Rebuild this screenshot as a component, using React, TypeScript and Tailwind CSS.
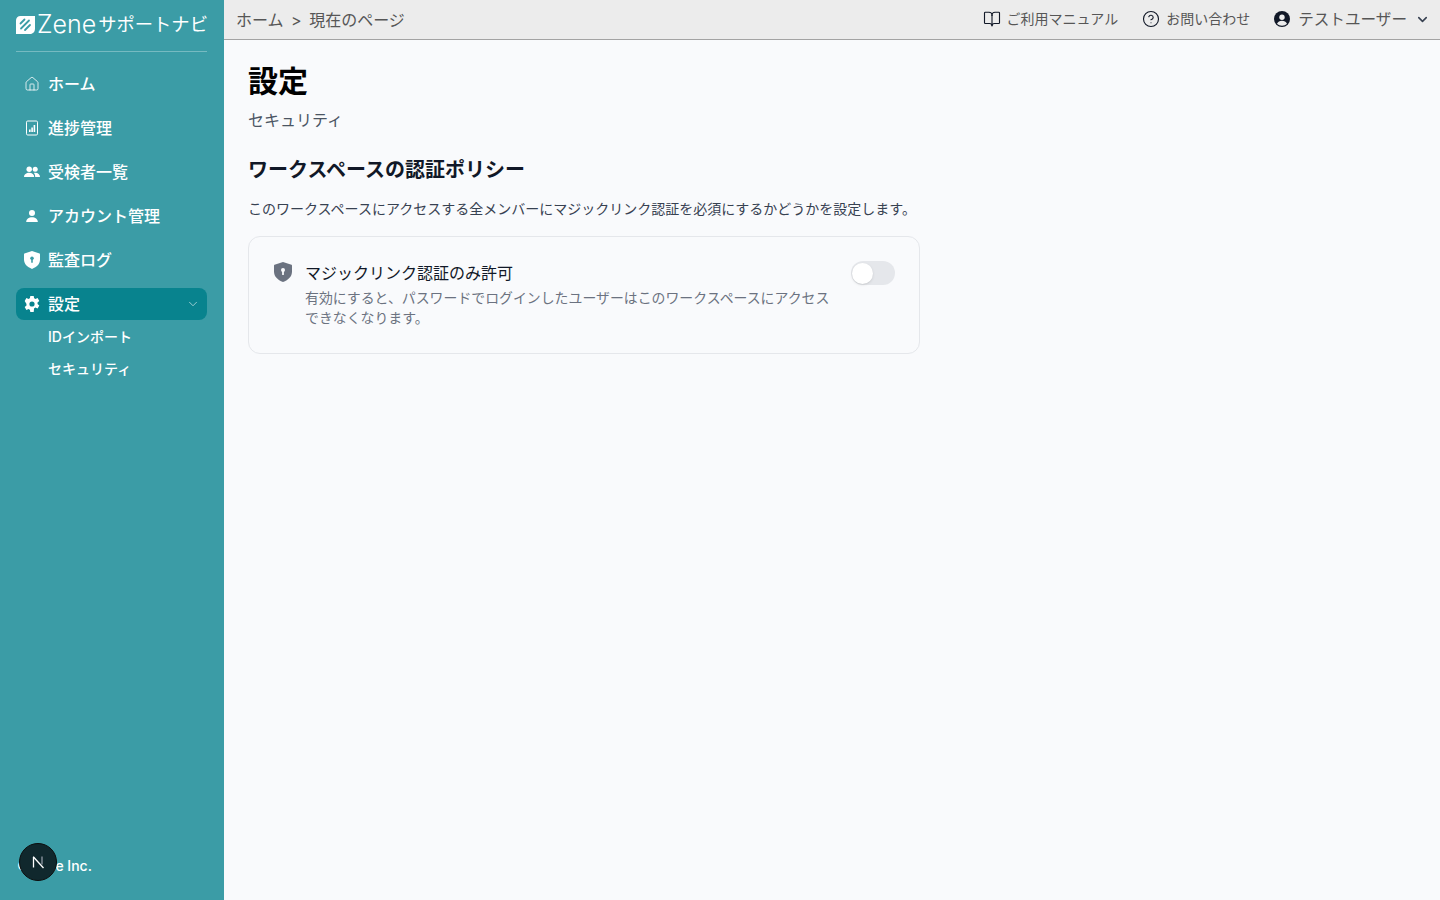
import { ChevronDown, House, BookOpen, CircleHelp } from "lucide-react";
import { ReactNode } from "react";

const font = "font-['Inter','Noto_Sans_CJK_JP',sans-serif]";

const IconProgress = () => (
  <svg width="16" height="16" viewBox="0 0 16 16" fill="none">
    <rect x="2.5" y="1" width="11" height="14" rx="1.2" stroke="white" strokeWidth="1" />
    <rect x="5" y="9.5" width="1.6" height="2.5" fill="white" />
    <rect x="7.3" y="7.5" width="1.6" height="4.5" fill="white" />
    <rect x="9.6" y="5" width="1.6" height="7" fill="white" />
  </svg>
);

const IconPeople = () => (
  <svg width="16" height="16" viewBox="0 0 16 16" fill="white">
    <circle cx="5.2" cy="5.2" r="2.7" />
    <circle cx="11.2" cy="5.2" r="2.5" />
    <path d="M0 13c0-2.6 2.3-4.2 5.2-4.2s5 1.6 5 4.2H0z" />
    <path d="M11.2 13H16c0-2.6-2-4.2-4.8-4.2-.6 0-1 .1-1.4.2 1 .9 1.4 2.4 1.4 4z" />
  </svg>
);

const IconUser = () => (
  <svg width="16" height="16" viewBox="0 0 16 16" fill="white">
    <circle cx="8" cy="5" r="3" />
    <path d="M2.2 14c0-3 2.6-4.8 5.8-4.8s5.8 1.800 5.800 4.800H2.200z" />
  </svg>
);

// filled shield with a keyhole
const IconShield = ({ color, hole, w, h }: { color: string; hole: string; w: number; h: number }) => (
  <svg width={w} height={h} viewBox="0 0 18 20">
    <path d="M9 0l8.500 2.800c.3.100.5.400.5.700v6c0 4.800-3.500 8.600-9 10.500C3.500 18.100 0 14.300 0 9.500v-6c0-.3.200-.6.500-.7L9 0z" fill={color} />
    <circle cx="9" cy="8" r="2" fill={hole} />
    <rect x="8.100" y="8.500" width="1.800" height="4.500" rx="0.600" fill={hole} />
  </svg>
);

const IconGear = () => (
  <svg width="16" height="16" viewBox="0 0 16 16" fill="white">
    <path
      fillRule="evenodd"
      d="M6.300 0h3.400l.4 2.200c.5.200.9.400 1.300.7l2.200-.8 1.700 2.900-1.800 1.500c.1.500.1 1 0 1.500l1.800 1.500-1.700 2.900-2.200-.8c-.4.300-.8.500-1.300.7L9.700 16H6.300l-.4-2.200c-.5-.2-.9-.4-1.300-.7l-2.200.8L.7 11l1.800-1.500c-.1-.5-.1-1 0-1.500L.7 5l1.700-2.900 2.200.8c.4-.3.8-.5 1.300-.7L6.300 0zM8 5.400a2.600 2.600 0 100 5.200 2.600 2.600 0 000-5.200z"
    />
  </svg>
);

const IconAccount = () => (
  <svg width="16" height="16" viewBox="0 0 16 16">
    <circle cx="8" cy="8" r="8" fill="#111827" />
    <circle cx="8" cy="6.200" r="2.700" fill="#ececec" />
    <path d="M3 12.700c.8-1.900 2.800-2.900 5-2.900s4.200 1 5 2.900C11.800 14 10 14.700 8 14.700s-3.800-.7-5-2z" fill="#ececec" />
  </svg>
);

const Logo = () => (
  <svg width="19" height="18" viewBox="0 0 19 18" className="shrink-0">
    <path d="M4.500 0H19v12.500c0 3.200-2 5.500-5 5.500H0V4.500C0 1.800 1.800 0 4.500 0z" fill="white" />
    <path d="M4.500 7.500l4-4M5 12.500l8-8M9 14l5-5" stroke="#3b9ca6" strokeWidth="1.800" strokeLinecap="round" />
  </svg>
);

const NextMark = () => (
  <svg width="14" height="14" viewBox="0 0 14 14" fill="none">
    <path d="M2.500 12.500V1.800" stroke="white" strokeWidth="1.300" />
    <path d="M2.300 1.800L12.500 13" stroke="white" strokeWidth="1.300" />
    <path d="M11 1.500v8" stroke="#9ca3af" strokeWidth="1.200" />
  </svg>
);

const NavItem = ({ icon, label }: { icon: ReactNode; label: string }) => (
  <div className="flex h-8 items-center gap-2 rounded-lg px-2 text-base font-medium text-white">
    <span className="flex w-4 justify-center">{icon}</span>
    {label}
  </div>
);

export default function App() {
  return (
    <div className={`relative flex h-[900px] w-[1440px] overflow-hidden bg-[#f9fafc] ${font}`}>
      <aside className="flex w-[224px] shrink-0 flex-col bg-[#3b9ca6] pr-[17px] pl-4">
        <div className="flex h-[52px] items-center gap-[2px] border-b border-white/30 pb-[2px] text-white">
          <Logo />
          <span className="text-[25px] leading-none font-light">Zene</span>
          <span className="text-[18.300px] leading-none whitespace-nowrap">サポートナビ</span>
        </div>
        <nav className="mt-4 flex flex-col gap-3">
          <NavItem icon={<House size={16} strokeWidth={1.200} color="white" />} label="ホーム" />
          <NavItem icon={<IconProgress />} label="進捗管理" />
          <NavItem icon={<IconPeople />} label="受検者一覧" />
          <NavItem icon={<IconUser />} label="アカウント管理" />
          <NavItem icon={<IconShield color="white" hole="#3b9ca6" w={16} h={18} />} label="監査ログ" />
        </nav>
        <div className="mt-3 flex h-8 items-center gap-2 rounded-lg bg-[#08838e] px-2 text-base font-medium text-white">
          <span className="flex w-4 justify-center"><IconGear /></span>
          <span className="flex-1">設定</span>
          <ChevronDown size={14} strokeWidth={1} color="white" className="-mr-[1px]" />
        </div>
        <div className="mt-[1px] flex flex-col text-sm font-medium text-white">
          <div className="flex h-8 items-center pl-8">IDインポート</div>
          <div className="flex h-8 items-center pl-8">セキュリティ</div>
        </div>
        <div className="mt-auto mb-[24px] pl-[1px] text-sm font-medium leading-5 text-white">©Zene Inc.</div>
      </aside>

      <div className="flex min-w-0 flex-1 flex-col">
        <header className="flex h-10 items-center justify-between border-b border-[#a3a3a3] bg-[#ececec] pr-[10px] pl-3">
          <div className="flex items-center gap-[7.500px] text-base text-[#565656]">
            <span>ホーム</span>
            <span>&gt;</span>
            <span>現在のページ</span>
          </div>
          <div className="flex items-center text-sm text-[#565656]">
            <BookOpen size={18} strokeWidth={1.500} color="#111827" />
            <span className="ml-[6px]">ご利用マニュアル</span>
            <CircleHelp size={18} strokeWidth={1.500} color="#111827" className="ml-6" />
            <span className="ml-[6px]">お問い合わせ</span>
            <span className="ml-6"><IconAccount /></span>
            <span className="mt-[2px] ml-2 text-[15.600px]">テストユーザー</span>
            <ChevronDown size={15} strokeWidth={2.500} color="#374151" className="ml-2" />
          </div>
        </header>

        <main className="flex-1 px-6 pt-[23px]">
          <h1 className="text-3xl leading-9 font-bold text-black">設定</h1>
          <p className="mt-[9px] text-base leading-6 text-[#4b5563]">セキュリティ</p>
          <h2 className="mt-6 text-xl leading-7 font-bold text-[#111827]">ワークスペースの認証ポリシー</h2>
          <p className="mt-[15px] text-sm leading-5 text-[#374151]">
            このワークスペースにアクセスする全メンバーにマジックリンク認証を必須にするかどうかを設定します。
          </p>
          <div className="mt-[17px] flex w-[672px] items-start rounded-xl border border-[#e5e7eb] px-6 pt-6 pb-[25px]">
            <span className="mt-[1px] ml-[1px] w-[19px] shrink-0">
              <IconShield color="#6b7280" hole="#f9fafc" w={18} h={20} />
            </span>
            <div className="ml-3 flex-1">
              <div className="text-base leading-6 text-[#111827]">マジックリンク認証のみ許可</div>
              <p className="mt-[3px] text-[13.900px] leading-5 text-[#6b7280]">
                有効にすると、パスワードでログインしたユーザーはこのワークスペースにアクセスできなくなります。
              </p>
            </div>
            <span className="ml-5 flex h-6 w-11 shrink-0 items-center rounded-full bg-[#e5e7eb] p-[1px]">
              <span className="h-[21px] w-[21px] rounded-full bg-white shadow" />
            </span>
          </div>
        </main>
      </div>

      {/* dev indicator */}
      <div className="absolute bottom-[19px] left-[19px] flex h-[38px] w-[38px] items-center justify-center rounded-full border border-[#0c0c0c] bg-[#10282d]">
        <NextMark />
      </div>
    </div>
  );
}
